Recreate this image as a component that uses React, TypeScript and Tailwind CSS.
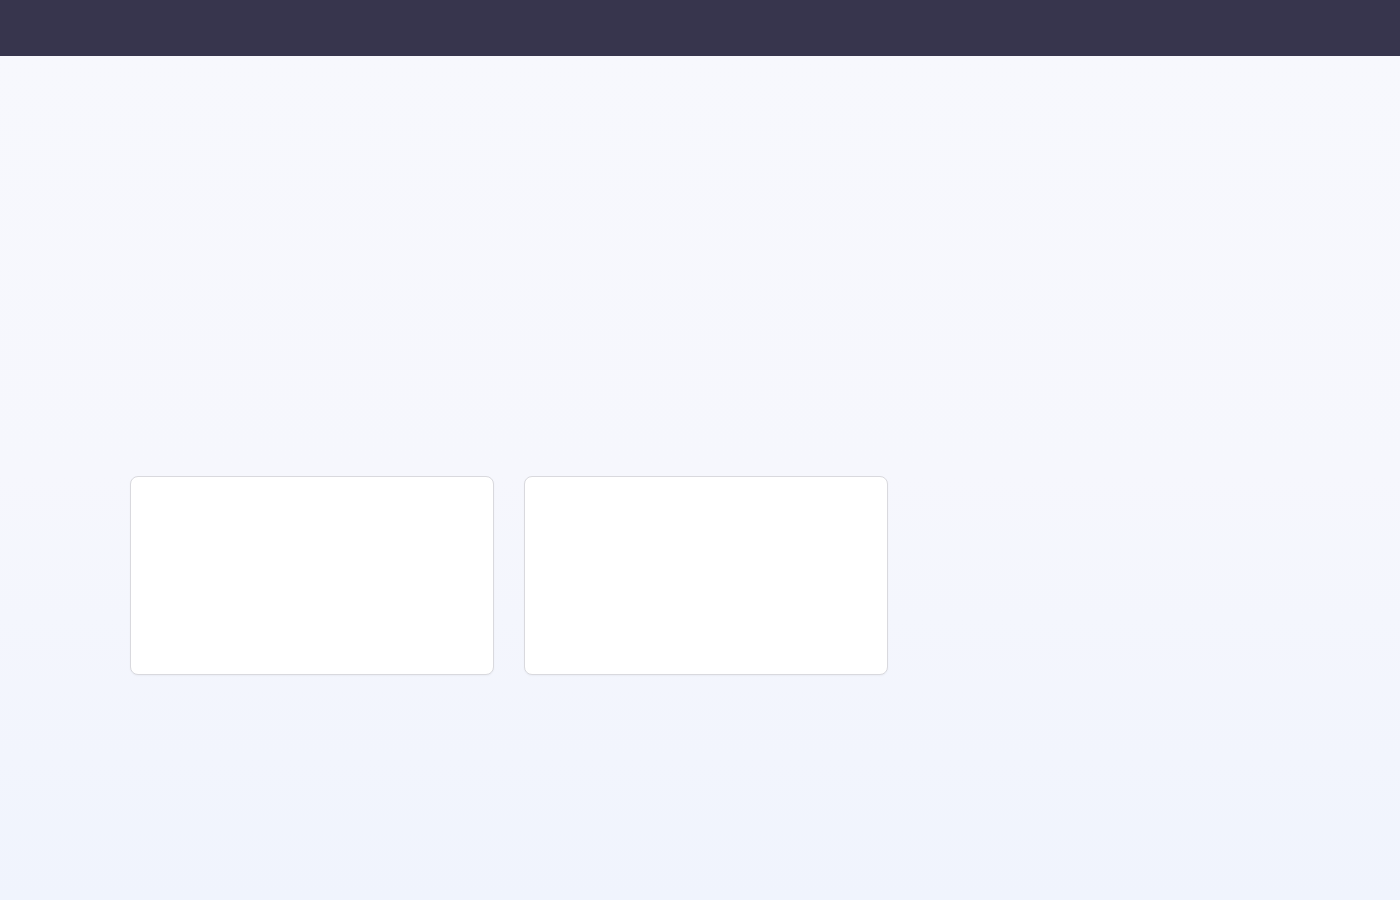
import React from "react";

export default function App() {
  return (
    <div className="w-[1400px] h-[900px] flex flex-col overflow-hidden" style={{ fontFamily: '"Liberation Sans", Arial, sans-serif' }}>
      <header className="h-14 shrink-0 bg-[#37354d]" />
      <main className="flex-1 bg-gradient-to-b from-[#f7f8fd] via-[#f6f7fd] to-[#f0f4fd] pl-[130px] pt-[420px]">
        <div className="flex gap-[30px]">
          <div className="w-[364px] h-[199px] bg-white border border-[#d9d9de] rounded-lg shadow-[0_1px_2px_rgba(0,0,0,0.04)]" />
          <div className="w-[364px] h-[199px] bg-white border border-[#d9d9de] rounded-lg shadow-[0_1px_2px_rgba(0,0,0,0.04)]" />
        </div>
      </main>
    </div>
  );
}
